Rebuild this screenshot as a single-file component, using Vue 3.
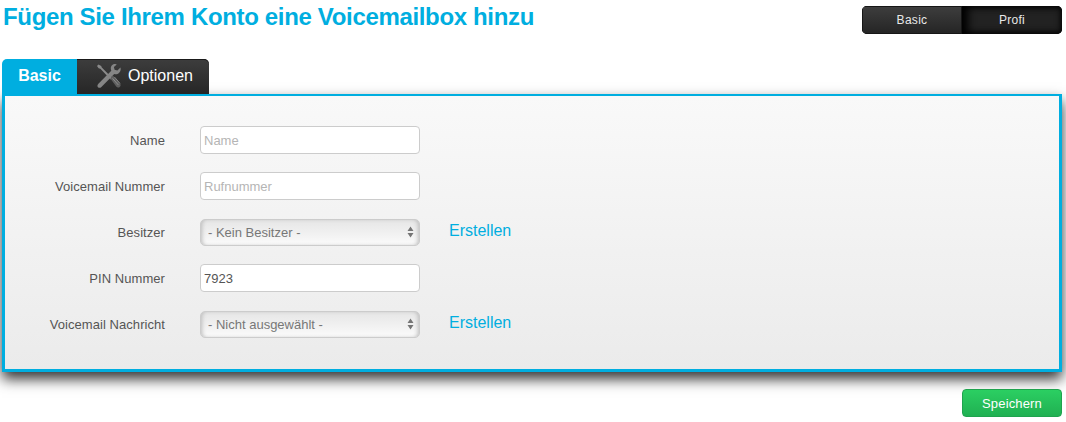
<script setup>
const rows = [
  { label: 'Name', type: 'input', placeholder: 'Name', value: '' },
  { label: 'Voicemail Nummer', type: 'input', placeholder: 'Rufnummer', value: '' },
  { label: 'Besitzer', type: 'select', value: '- Kein Besitzer -' },
  { label: 'PIN Nummer', type: 'input', placeholder: '', value: '7923' },
  { label: 'Voicemail Nachricht', type: 'select', value: '- Nicht ausgewählt -' }
];
</script>

<template>
  <div class="page">
    <header class="top">
      <h1>Fügen Sie Ihrem Konto eine Voicemailbox hinzu</h1>
      <div class="switch">
        <button class="sw">Basic</button>
        <button class="sw active">Profi</button>
      </div>
    </header>

    <nav class="tabs">
      <div class="tab current">Basic</div>
      <div class="tab other">
        <svg width="26" height="26" viewBox="0 0 26 26">
          <path d="M2.5 1.5 L1 3 L2.6 5.2 L4.4 5.8 L14.6 16.6 L16.2 15 L5.8 4.6 L5.2 2.9 Z" fill="#8a8a8a"/>
          <path d="M14.2 15.2 L16.8 12.6 L24 20.5 C25 21.8 24.7 23.2 23.7 24 C22.7 24.9 21.2 24.8 20.2 23.6 Z" fill="#5f5f5f"/>
          <path d="M16.6 15.4 L22.4 22 M18.4 14 L24 20.4" stroke="#8f8f8f" stroke-width="0.9" fill="none"/>
          <path d="M20 1.2 C17.2 .6 14.6 2.8 14.8 5.8 C14.9 6.6 15 7.2 15.3 7.8 L2.4 20.8 C1.2 22 1.2 23.4 2 24.2 C2.9 25.1 4.3 25 5.4 23.9 L18.2 11 C21.4 12 24.6 9.6 24.7 6.2 C24.7 5.6 24.6 5 24.4 4.5 L21.4 7.4 L18.6 6.8 L17.9 4 L20.8 1.4 Z" fill="#858585"/>
        </svg>
        <span>Optionen</span>
      </div>
    </nav>

    <section class="panel">
      <div v-for="row in rows" :key="row.label" class="row">
        <label class="lbl">{{ row.label }}</label>
        <input v-if="row.type === 'input'" class="field" type="text" :placeholder="row.placeholder" :value="row.value" />
        <template v-else>
          <div class="selectbox">
            <select class="sel">
              <option>{{ row.value }}</option>
            </select>
            <svg class="arrows" width="7" height="12" viewBox="0 0 7 12">
              <path d="M3.5 0.5 L6.5 5 L0.5 5 Z M0.5 7 L6.5 7 L3.5 11.5 Z" fill="#757575"/>
            </svg>
          </div>
          <a class="create">Erstellen</a>
        </template>
      </div>
    </section>

    <footer class="bottom">
      <button class="save">Speichern</button>
    </footer>
  </div>
</template>

<style>
body {
  background: #fff;
}
</style>

<style scoped>
.page {
  width: 1066px;
  height: 422px;
  overflow: hidden;
  font-family: "Liberation Sans", Arial, sans-serif;
  position: relative;
}

.top {
  display: flex;
  justify-content: space-between;
  align-items: flex-start;
  height: 59px;
  padding: 6px 4px 0 3px;
  box-sizing: border-box;
}

h1 {
  margin: -2px 0 0;
  font-size: 24px;
  line-height: 26px;
  font-weight: bold;
  color: #00aee0;
  letter-spacing: -0.34px;
}

.switch {
  display: flex;
  width: 200px;
  height: 28px;
  border-radius: 5px;
  overflow: hidden;
  box-shadow: inset 0 0 0 1px #111;
}

.sw {
  width: 50%;
  border: 0;
  padding: 0;
  color: #e8e8e8;
  font-family: inherit;
  font-size: 12px;
  letter-spacing: 0.3px;
  background: linear-gradient(#3e3e3e, #242424);
  box-shadow: inset 0 0 0 1px #161616;
}

.sw.active {
  background: #222;
  box-shadow: inset 6px 0 8px #000, inset -1px 0 6px #000;
}

.tabs {
  display: flex;
  height: 35px;
  padding-left: 2px;
}

.tab {
  display: flex;
  align-items: center;
  box-sizing: border-box;
  font-size: 16px;
  color: #fff;
}

.current {
  width: 75px;
  justify-content: center;
  background: #00aee0;
  border-radius: 5px 0 0 0;
  font-weight: bold;
  padding-bottom: 2px;
}

.other {
  width: 132px;
  gap: 6px;
  padding: 0 0 1px 19px;
  background: linear-gradient(#3d3d3d, #262626);
  border-radius: 0 5px 0 0;
  box-shadow: inset 0 1px 0 #1a1a1a;
}

.panel {
  margin: 0 4px 0 2px;
  height: 278px;
  box-sizing: border-box;
  border: 3px solid #00aee0;
  border-top-width: 2px;
  background: linear-gradient(#f9f9f9, #ebebeb);
  box-shadow: 0 7px 13px rgba(0, 0, 0, 0.8);
  padding: 30px 0 0;
  display: flex;
  flex-direction: column;
  gap: 18px;
}

.row {
  display: flex;
  align-items: center;
  height: 28px;
}

.lbl {
  width: 160px;
  margin-right: 35px;
  text-align: right;
  font-size: 13px;
  letter-spacing: 0.06px;
  color: #555;
}

.field {
  width: 220px;
  height: 28px;
  box-sizing: border-box;
  border: 1px solid #ccc;
  border-radius: 4px;
  background: #fff;
  padding: 0 3px;
  font-family: inherit;
  font-size: 13px;
  color: #555;
  outline: none;
}

.field::placeholder {
  color: #b5b5b5;
  font-size: 13px;
}

.selectbox {
  position: relative;
  width: 220px;
  height: 27px;
  margin-top: 1px;
}

.sel {
  appearance: none;
  width: 100%;
  height: 100%;
  box-sizing: border-box;
  border: 1px solid #ccc;
  border-radius: 5px;
  padding: 0 7px;
  font-family: inherit;
  font-size: 13px;
  color: #777;
  background: linear-gradient(#e6e6e6, #f2f2f2 60%, #fbfbfb);
  box-shadow: inset 3px 0 4px -2px #bbb, inset -3px 0 4px -2px #bbb;
  outline: none;
}

.arrows {
  position: absolute;
  right: 6px;
  top: 7px;
}

.create {
  margin-left: 29px;
  margin-top: -2px;
  font-size: 16px;
  color: #00aee0;
  cursor: pointer;
}

.bottom {
  display: flex;
  justify-content: flex-end;
  padding: 17px 4px 0 0;
}

.save {
  width: 100px;
  height: 28px;
  border: 1px solid #1fa34e;
  border-radius: 4px;
  background: linear-gradient(#2bcf62, #20b052);
  color: #fff;
  font-family: inherit;
  font-size: 13px;
  letter-spacing: 0.15px;
  padding: 0;
}
</style>
